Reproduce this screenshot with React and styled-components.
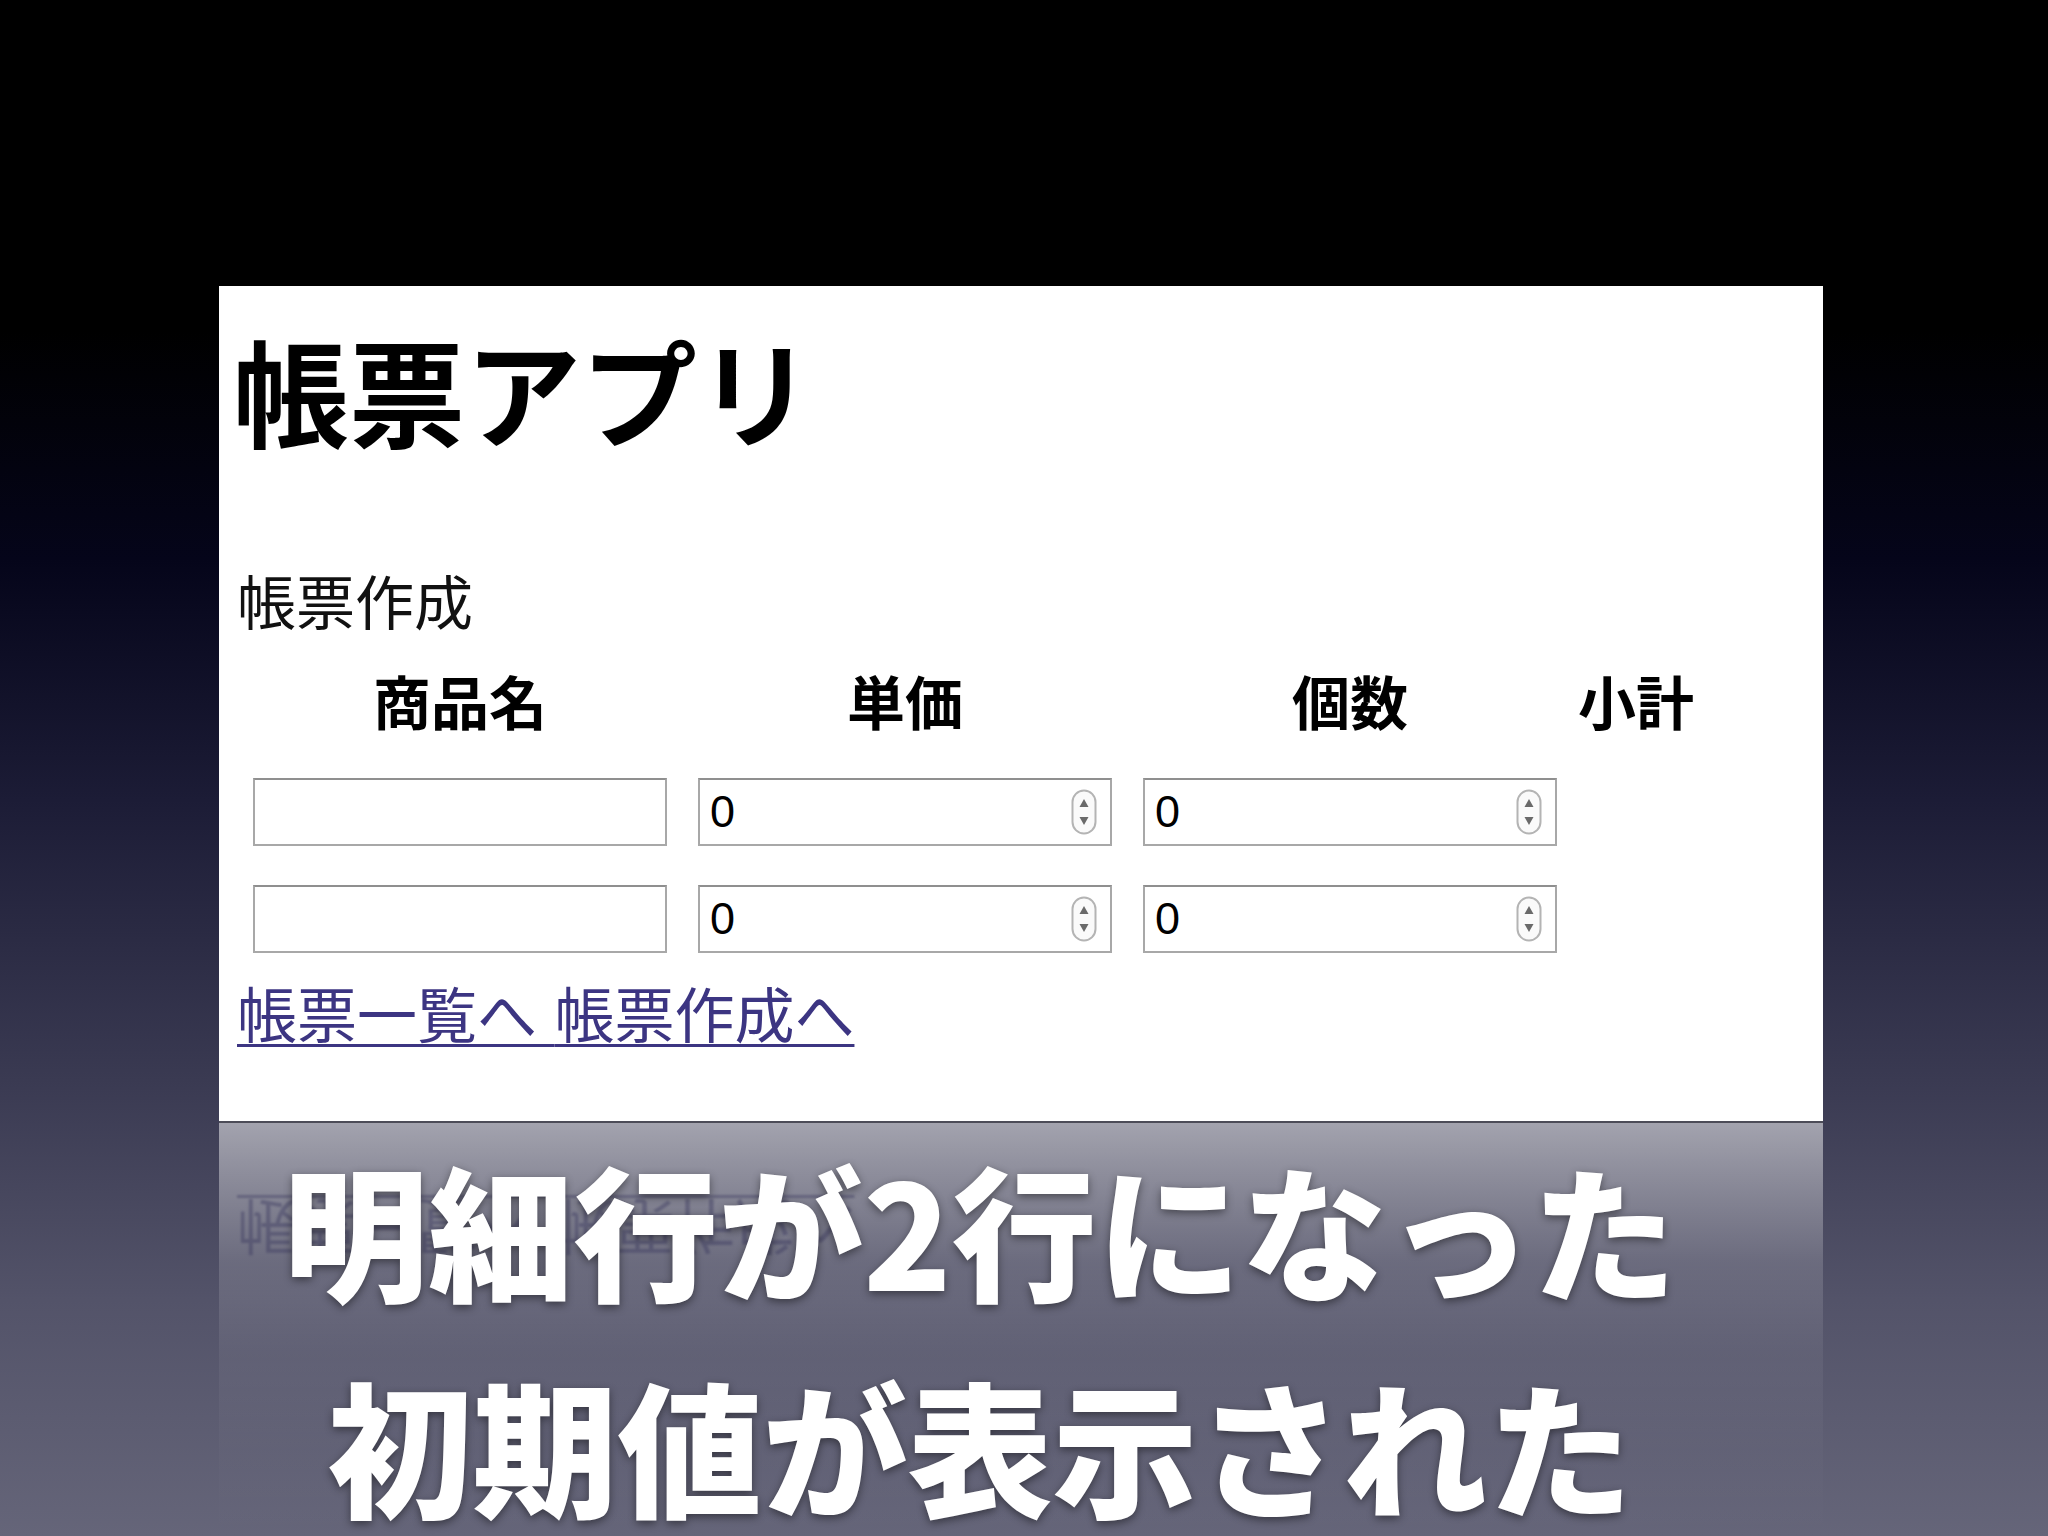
import React from 'react'
import styled, { createGlobalStyle } from 'styled-components'

const GlobalStyle = createGlobalStyle`
  html, body {
    margin: 0;
    padding: 0;
    background: #000;
  }
  body {
    font-family: "Noto Sans CJK JP", "Noto Sans", sans-serif;
  }
`

const Slide = styled.div`
  width: 2048px;
  height: 1536px;
  overflow: hidden;
  padding-top: 286px;
  box-sizing: border-box;
  background: linear-gradient(
    to bottom,
    #000 0,
    #000 330px,
    #05051a 560px,
    #1c1c36 800px,
    #3a3a52 1080px,
    #535369 1300px,
    #656579 1536px
  );
`

const Panel = styled.div`
  width: 1604px;
  height: 835px;
  margin-left: 219px;
  box-sizing: border-box;
  padding: 32px 0 0 18px;
  background: #fff;
  color: #000;
  display: flex;
  flex-direction: column;
  align-items: flex-start;
`

const Title = styled.h1`
  margin: 0 0 0 -4px;
  font-size: 116px;
  line-height: 140px;
  font-weight: 700;
`

const Subtitle = styled.div`
  margin-top: 107px;
  font-size: 59px;
  line-height: 70px;
  font-weight: 400;
  color: #111;
`

const Row = styled.div`
  display: grid;
  grid-template-columns: 414px 414px 414px auto;
  column-gap: 31px;
  margin-left: 16px;
  margin-top: ${p => p.$gap}px;
`

const Head = styled.div`
  font-size: 58px;
  line-height: 70px;
  font-weight: 700;
  text-align: center;
  margin-left: ${p => p.$shift || 0}px;
`

const TextBox = styled.input`
  height: 68px;
  box-sizing: border-box;
  border: 2px solid #a8a8a8;
  border-top-color: #8f8f8f;
  background: #fff;
  padding: 0 10px;
  font-family: "Liberation Sans", Arial, sans-serif;
  font-size: 46px;
  outline: none;
  margin: 0;
`

const NumberBox = styled.div`
  height: 68px;
  box-sizing: border-box;
  border: 2px solid #a8a8a8;
  border-top-color: #8f8f8f;
  background: #fff;
  display: flex;
  align-items: center;
  padding: 0 13px 0 10px;
  gap: 8px;

  input {
    flex: 1;
    min-width: 0;
    border: none;
    outline: none;
    padding: 0;
    background: transparent;
    font-family: "Liberation Sans", Arial, sans-serif;
    font-size: 45px;
    color: #000;
    -moz-appearance: textfield;
  }
  input::-webkit-inner-spin-button,
  input::-webkit-outer-spin-button {
    -webkit-appearance: none;
    margin: 0;
  }
`

const Links = styled.div`
  margin-top: 24px;
  font-size: 60px;
  line-height: 70px;
`

const Link = styled.a`
  color: #3c3582;
  text-decoration: underline;
  text-decoration-thickness: 3px;
  text-underline-offset: 6px;
  word-spacing: 4px;
`

const Reflection = styled.div`
  position: relative;
  width: 1604px;
  height: 415px;
  margin-left: 219px;
  box-sizing: border-box;
  border-top: 2px solid #4c4c58;
  background: linear-gradient(
    to bottom,
    rgba(255, 255, 255, 0.52) 0,
    rgba(255, 255, 255, 0.34) 70px,
    rgba(255, 255, 255, 0.16) 140px,
    rgba(255, 255, 255, 0.06) 230px,
    rgba(255, 255, 255, 0.02) 330px,
    rgba(255, 255, 255, 0) 415px
  );
`

const MirrorText = styled.div`
  position: absolute;
  top: 72px;
  left: 18px;
  font-size: 60px;
  line-height: 70px;
  color: #2c2a55;
  opacity: 0.35;
  transform: scaleY(-1);
  filter: blur(1px);
  text-decoration: underline;
  text-decoration-thickness: 3px;
  text-underline-offset: 6px;
  word-spacing: 4px;
  white-space: nowrap;
`

const Caption = styled.div`
  position: relative;
  margin-top: -3px;
  padding-right: 82px;
  text-align: center;
  color: #fff;
  font-size: 145px;
  line-height: 216px;
  font-weight: 900;
  white-space: nowrap;
  text-shadow: 0 3px 8px rgba(0, 0, 0, 0.45);
`

function Spinner() {
  return (
    <svg width="26" height="46" viewBox="0 0 26 46">
      <rect x="1.5" y="1.5" width="23" height="43" rx="11.5" fill="#fafafa" stroke="#b4b4b4" strokeWidth="2" />
      <path d="M13 10 L17.5 18 L8.5 18 Z" fill="#6a6a6a" />
      <path d="M13 36 L17.5 28 L8.5 28 Z" fill="#6a6a6a" />
    </svg>
  )
}

function NumberField() {
  return (
    <NumberBox>
      <input type="number" defaultValue={0} />
      <Spinner />
    </NumberBox>
  )
}

function ItemRow({ gap }) {
  return (
    <Row $gap={gap}>
      <TextBox type="text" />
      <NumberField />
      <NumberField />
      <div />
    </Row>
  )
}

export default function App() {
  return (
    <>
      <GlobalStyle />
      <Slide>
        <Panel>
          <Title>帳票アプリ</Title>
          <Subtitle>帳票作成</Subtitle>
          <Row $gap={30}>
            <Head>商品名</Head>
            <Head>単価</Head>
            <Head>個数</Head>
            <Head $shift={-10}>小計</Head>
          </Row>
          <ItemRow gap={43} />
          <ItemRow gap={39} />
          <Links>
            <Link href="#">帳票一覧へ </Link>
            <Link href="#">帳票作成へ</Link>
          </Links>
        </Panel>
        <Reflection>
          <MirrorText>帳票一覧へ 帳票作成へ</MirrorText>
          <Caption>
            明細行が2行になった
            <br />
            初期値が表示された
          </Caption>
        </Reflection>
      </Slide>
    </>
  )
}
